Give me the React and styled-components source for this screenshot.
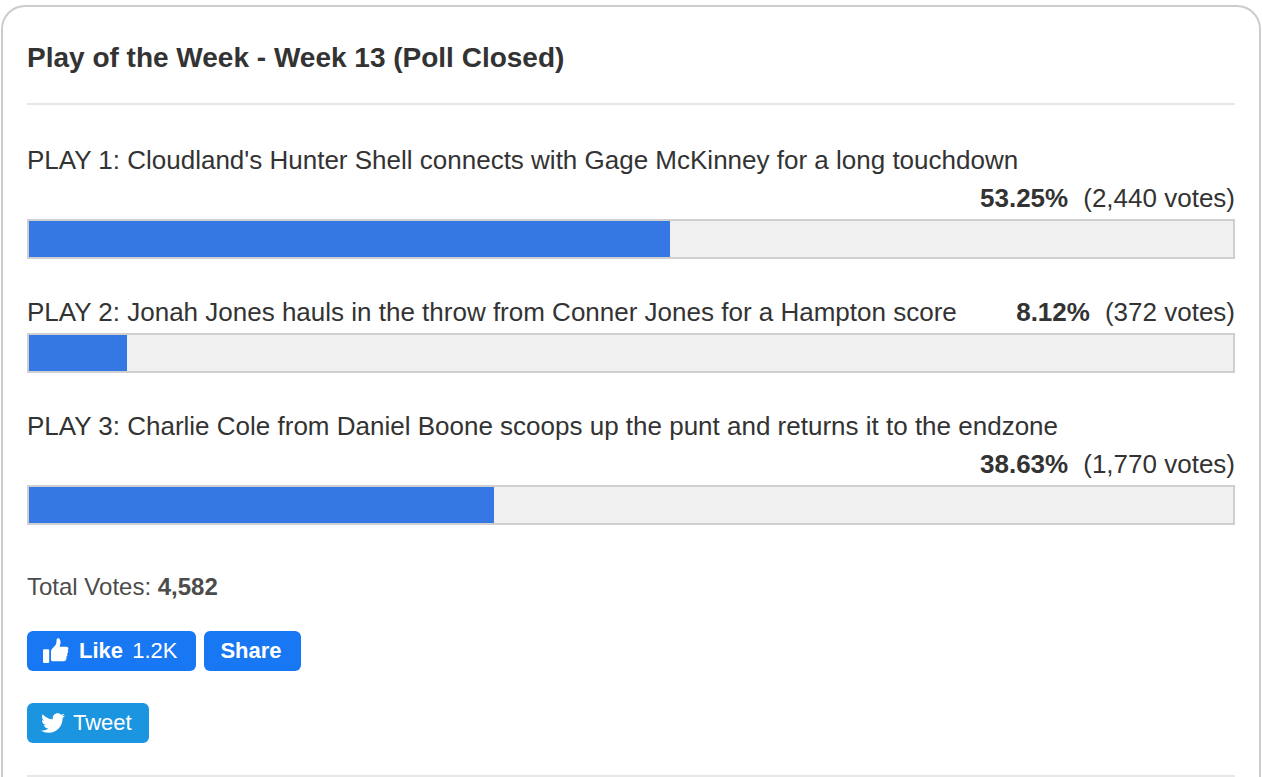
import React from "react";
import styled, { createGlobalStyle } from "styled-components";
import { FaTwitter } from "react-icons/fa";

const plays = [
  {
    id: "play-1",
    label:
      "PLAY 1: Cloudland's Hunter Shell connects with Gage McKinney for a long touchdown",
    percent: 53.25,
    votes: "2,440",
  },
  {
    id: "play-2",
    label:
      "PLAY 2: Jonah Jones hauls in the throw from Conner Jones for a Hampton score",
    percent: 8.12,
    votes: "372",
  },
  {
    id: "play-3",
    label:
      "PLAY 3: Charlie Cole from Daniel Boone scoops up the punt and returns it to the endzone",
    percent: 38.63,
    votes: "1,770",
  },
];

const ThumbIcon = () => (
  <svg width="26" height="26" viewBox="0 0 26 26" fill="#fff" aria-hidden="true">
    <rect x="0" y="11.2" width="6.2" height="13.8" rx="1.2" />
    <path d="M8 13.4c0-1 .3-1.700.9-2.400L12.300 7.200c.7-.8 1-1.600 1.100-2.700l.2-2.700C13.700.8 14.200.2 15 .2c1.500 0 2.500 1.600 2.500 4 0 1.700-.3 3.100-.9 4.600h6.900c1.100 0 1.900.7 1.900 1.700 0 .7-.3 1.300-.8 1.600.4.400.6.900.6 1.500 0 1-.5 1.600-1.200 2 .3.400.4.800.4 1.200 0 1-.5 1.700-1.200 2 .2.400.3.700.3 1.100 0 1.900-1 3.300-3 3.300H9.500C8.600 23.200 8 22.600 8 21.700z" />
  </svg>
);

const App = () => {
  return (
    <>
      <GlobalStyle />
      <Card>
        <Title>Play of the Week - Week 13 (Poll Closed)</Title>
        <Results>
          {plays.map((play) => (
            <li key={play.id}>
              <Answer>
                <span id={play.id}>{play.label}</span>
                <Votes>
                  <b>{play.percent}%</b>
                  <span>({play.votes} votes)</span>
                </Votes>
              </Answer>
              <Track
                role="meter"
                aria-labelledby={play.id}
                aria-valuemin={0}
                aria-valuemax={100}
                aria-valuenow={play.percent}
              >
                <Fill style={{ width: `${play.percent}%` }} />
              </Track>
            </li>
          ))}
        </Results>
        <Total>
          Total Votes: <b>4,582</b>
        </Total>
        <Social>
          <SocialButton type="button">
            <ThumbIcon />
            <span>
              <b>Like</b> <Count>1.2K</Count>
            </span>
          </SocialButton>
          <SocialButton type="button">
            <b>Share</b>
          </SocialButton>
        </Social>
        <Social>
          <TweetLink href="#tweet">
            <FaTwitter size={24} aria-hidden="true" />
            Tweet
          </TweetLink>
        </Social>
      </Card>
    </>
  );
};

export default App;

const GlobalStyle = createGlobalStyle`
  * {
    box-sizing: border-box;
  }

  body {
    margin: 0;
    background: #fff;
    color: #333;
    font-family: "Liberation Sans", Arial, sans-serif;
    font-size: 26px;
    line-height: 38px;
  }
`;

const Card = styled.main`
  margin: 5px 1px 0;
  padding: 0 24px;
  border: 2px solid #ccc;
  border-bottom: 0;
  border-radius: 24px 24px 0 0;

  &::after {
    content: "";
    display: block;
    margin-top: 32px;
    border-top: 2px solid #e7e7e7;
  }
`;

const Title = styled.h1`
  margin: 0;
  padding: 35px 0 29px;
  border-bottom: 2px solid #e7e7e7;
  font-size: 28px;
  line-height: 32px;
`;

const Results = styled.ul`
  display: flex;
  flex-direction: column;
  gap: 34px;
  margin: 36px 0 47px;
  padding: 0;
  list-style: none;
`;

const Answer = styled.div`
  display: flex;
  flex-wrap: wrap;
  column-gap: 20px;
`;

const Votes = styled.span`
  display: flex;
  gap: 15px;
  margin-left: auto;
`;

const Track = styled.div`
  height: 40px;
  margin-top: 2px;
  background: #f0f0f0;
  border: 2px solid #cfcfcf;
`;

const Fill = styled.div`
  height: 100%;
  background: #3578e3;
`;

const Total = styled.p`
  margin: 0 0 29px;
  color: #4c4c4c;
  font-size: 24px;
  line-height: 30px;
`;

const Social = styled.div`
  display: flex;
  gap: 8px;

  & + & {
    margin-top: 32px;
  }
`;

const SocialButton = styled.button`
  display: flex;
  align-items: center;
  gap: 10px;
  height: 40px;
  padding: 0 19px 0 16px;
  border: 0;
  border-radius: 6px;
  background: #1877f2;
  color: #fff;
  font-family: inherit;
  font-size: 22px;
  line-height: 40px;
  cursor: pointer;
`;

const Count = styled.span`
  margin-left: 3px;
`;

const TweetLink = styled.a`
  display: flex;
  align-items: center;
  gap: 8px;
  height: 40px;
  padding: 0 17px 0 14px;
  border-radius: 6px;
  background: #1b95e0;
  color: #fff;
  font-size: 22px;
  line-height: 40px;
  text-decoration: none;
`;
